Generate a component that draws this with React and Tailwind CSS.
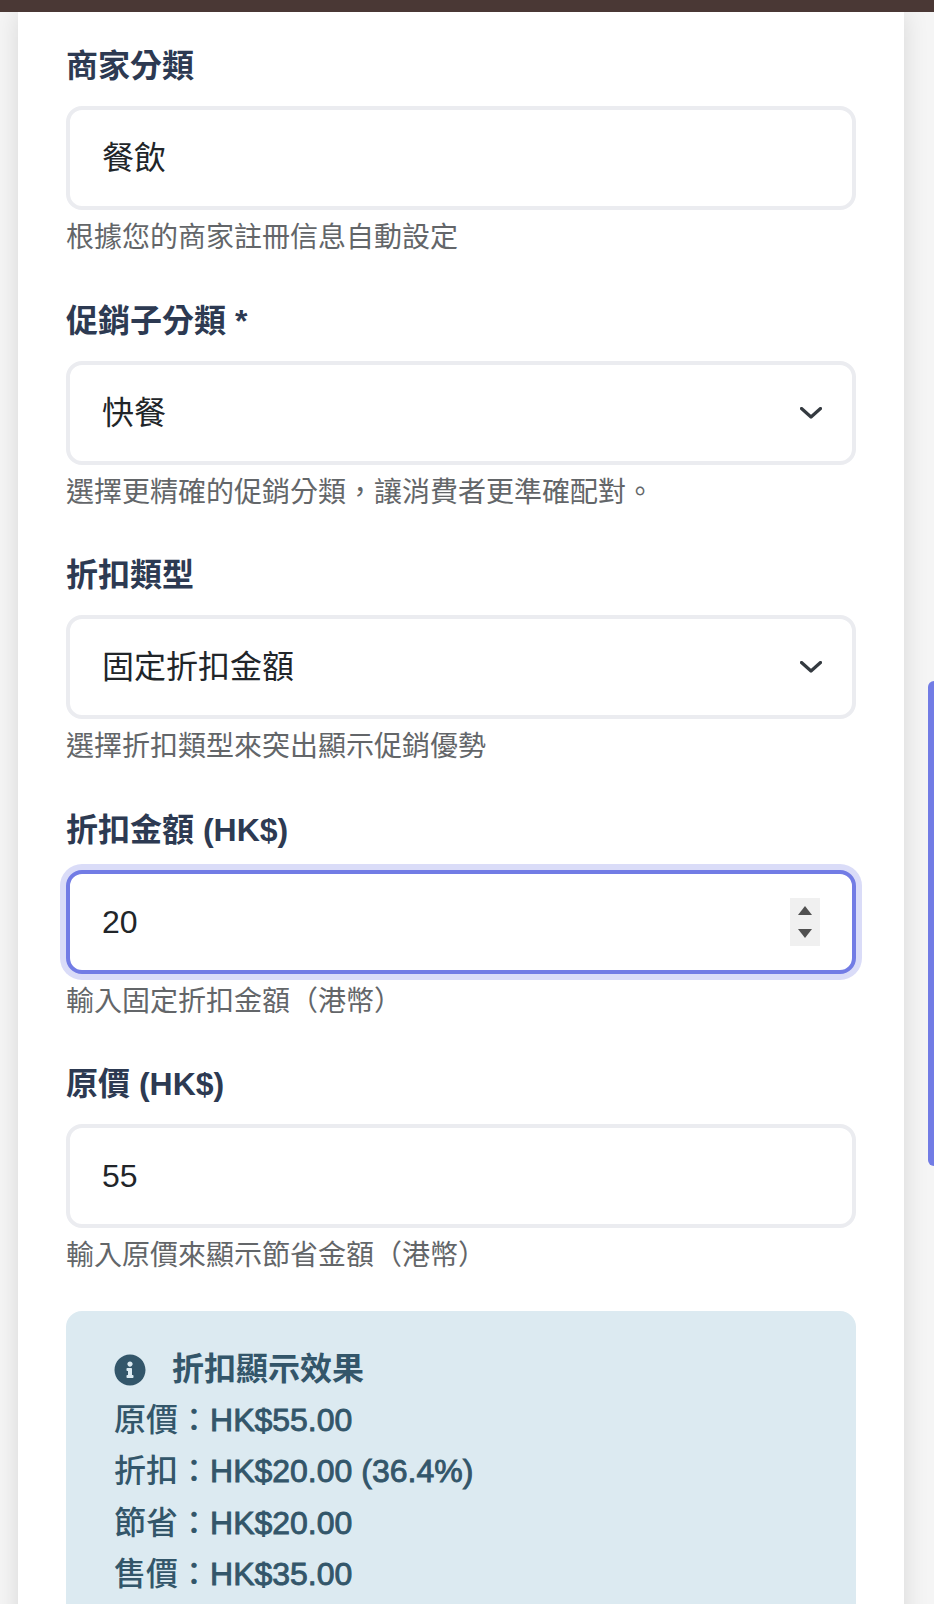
import { FaInfoCircle } from 'react-icons/fa'

const font = { fontFamily: '"Liberation Sans", "Noto Sans CJK TC", sans-serif' }

function Chevron() {
  return (
    <svg width="22" height="12" viewBox="0 0 22 12" fill="none" className="mr-[2px] shrink-0">
      <path d="M1.5 1.5 11 10 20.5 1.5" stroke="#343a40" strokeWidth="3.2" strokeLinecap="round" strokeLinejoin="round" />
    </svg>
  )
}

function Spinner() {
  return (
    <div className="w-[30px] h-[48px] bg-[#f0f0f0] flex flex-col items-center justify-between py-[8px] mr-[4px] shrink-0">
      <svg width="14" height="9" viewBox="0 0 14 9"><path d="M7 0 14 9H0z" fill="#505050" /></svg>
      <svg width="14" height="9" viewBox="0 0 14 9"><path d="M0 0H14L7 9z" fill="#505050" /></svg>
    </div>
  )
}

function Field({ label, value, hint, right, focused }) {
  return (
    <div>
      <label className="block text-[32px] leading-[51px] font-bold text-[#2d3a52] mb-[14px]">{label}</label>
      <div
        className={
          focused
            ? 'flex items-center justify-between h-[104px] bg-white rounded-[16px] border-[4px] border-[#727ce5] pl-[32px] pr-[28px] ring-[6px] ring-[#dadcf8]'
            : 'flex items-center justify-between h-[104px] bg-white rounded-[16px] border-[4px] border-[#ebecf0] pl-[32px] pr-[28px]'
        }
      >
        <span className="text-[32px] text-[#212529]">{value}</span>
        {right}
      </div>
      <p className="text-[28px] leading-[48px] mt-[4px] text-[#636669]">{hint}</p>
    </div>
  )
}

const previewLines = [
  ['原價：', 'HK$55.00'],
  ['折扣：', 'HK$20.00 (36.4%)'],
  ['節省：', 'HK$20.00'],
  ['售價：', 'HK$35.00'],
]

export default function App() {
  return (
    <div lang="zh-Hant" className="relative h-[1604px] w-[934px] overflow-hidden bg-[#f5f5f5]" style={font}>
      <div className="relative z-10 h-[12px] bg-[#4a3835]" />
      <div className="ml-[18px] w-[886px] min-h-[1592px] bg-white px-[48px] pt-[29px] shadow-[0_0_24px_rgba(0,0,0,0.12)]">
        <div className="flex flex-col gap-[33.5px]">
          <Field label="商家分類" value="餐飲" hint="根據您的商家註冊信息自動設定" />
          <Field label="促銷子分類 *" value="快餐" hint="選擇更精確的促銷分類，讓消費者更準確配對。" right={<Chevron />} />
          <Field label="折扣類型" value="固定折扣金額" hint="選擇折扣類型來突出顯示促銷優勢" right={<Chevron />} />
          <Field label="折扣金額 (HK$)" value="20" hint="輸入固定折扣金額（港幣）" right={<Spinner />} focused />
          <Field label="原價 (HK$)" value="55" hint="輸入原價來顯示節省金額（港幣）" />
        </div>
        <div className="mt-[31px] bg-[#dceaf1] rounded-[16px] px-[48px] pt-[33px] pb-[32px] text-[#33566a] text-[32px] leading-[51.2px] font-medium">
          <div className="flex items-center font-bold">
            <FaInfoCircle className="w-[32px] h-[32px] mr-[26px]" />
            <span>折扣顯示效果</span>
          </div>
          {previewLines.map(([name, amount]) => (
            <div key={name}>
              {name}
              <span className="[-webkit-text-stroke:0.9px]">{amount}</span>
            </div>
          ))}
        </div>
      </div>
      {/* page scrollbar thumb */}
      <div className="absolute right-0 top-[681px] w-[6px] h-[485px] bg-[#727ce5] rounded-l-[6px]" />
    </div>
  )
}
